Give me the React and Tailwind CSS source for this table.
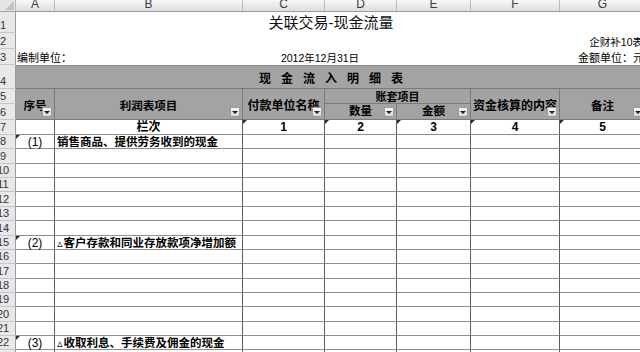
const W = ['w-[39px]', 'w-[188px]', 'w-[82px]', 'w-[72px]', 'w-[74px]', 'w-[89px]', 'w-[86px]'];
const LETTERS = ['A', 'B', 'C', 'D', 'E', 'F', 'G'];

// heights of sheet rows 1..23
const ROW_H = [
  'h-[21px]', 'h-[16px]', 'h-[16px]', 'h-[24px]', 'h-[15px]', 'h-[16px]', 'h-[15px]',
  'h-[14px]', 'h-[15px]', 'h-[14px]', 'h-[14px]', 'h-[15px]', 'h-[14px]', 'h-[15px]', 'h-[14px]',
  'h-[14px]', 'h-[15px]', 'h-[14px]', 'h-[14px]', 'h-[15px]', 'h-[14px]', 'h-[14px]', 'h-[14px]',
];

const DATA = {
  8: ['(1)', '销售商品、提供劳务收到的现金', false],
  15: ['(2)', '客户存款和同业存放款项净增加额', true],
  22: ['(3)', '收取利息、手续费及佣金的现金', true],
};

function Filter() {
  return (
    <span className="absolute right-[2px] bottom-[2px] w-[10px] h-[10px] border border-[#9a9a9a] bg-linear-to-b from-[#fafafa] to-[#d6d6d6] flex items-center justify-center">
      <span className="w-0 h-0 border-l-[3px] border-r-[3px] border-t-[3px] border-l-transparent border-r-transparent border-t-[#1e1e1e]" />
    </span>
  );
}

function Flag() {
  return <span className="absolute left-0 top-0 w-0 h-0 border-t-[4px] border-r-[4px] border-t-[#2b2b2b] border-r-transparent" />;
}

export default function App() {
  const head = 'relative flex items-center justify-center bg-[#a3a3a3] border-r border-b border-[#7a7a7a] font-bold text-[11.5px] text-black whitespace-nowrap';
  const r7 = 'relative flex items-center justify-center border-r border-r-[#5c5c5c] border-b border-b-[#8f8f8f] font-bold text-[12px] text-black';

  return (
    <div className="w-[640px] h-[352px] overflow-hidden bg-white font-['Liberation_Sans','Noto_Sans_CJK_SC',sans-serif] text-black">
      {/* column letters */}
      <div className="flex h-[12px] overflow-hidden border-b border-[#9c9c9c]">
        <div className="w-[16px] shrink-0 bg-[#e6e6e6] border-r border-[#b8b8b8] flex items-end justify-end pr-[1px] pb-[1px]">
          <svg width="9" height="9" viewBox="0 0 9 9">
            <polygon points="9,0 9,9 0,9" fill="#c2c2c2" />
          </svg>
        </div>
        {LETTERS.map((l, i) => (
          <div key={l} className={`${W[i]} shrink-0 flex items-start justify-center bg-linear-to-b from-[#f8f8f8] to-[#dedede] border-r border-[#bcbcbc] text-[12px] leading-[9px] text-[#3d3d3d]`}>
            {l}
          </div>
        ))}
      </div>

      <div className="flex">
        {/* row numbers */}
        <div className="w-[16px] shrink-0 flex flex-col overflow-hidden">
          {ROW_H.map((h, i) => (
            <div key={i} className={`${h} shrink-0 flex items-end justify-center pr-[9px] pb-[1px] bg-[#e8e8e8] border-b border-[#c6c6c6] border-r border-r-[#9c9c9c] text-[11px] leading-[11px] text-[#353535] whitespace-nowrap`}>
              {i + 1}
            </div>
          ))}
        </div>

        <div className="w-[630px] shrink-0 flex flex-col">
          {/* rows 1-7 */}
          <div className="grid grid-cols-[39px_188px_82px_72px_74px_89px_86px] grid-rows-[21px_16px_16px_24px_15px_16px_15px]">
            <div className="col-[1/8] row-[1/2] flex items-center justify-center text-[15px] leading-[16px] text-[#111]">
              关联交易-现金流量
            </div>
            <div className="col-[7/8] row-[2/3] flex items-end justify-end pr-[3px] pb-[1px] text-[10.5px] leading-[12px] whitespace-nowrap">
              企财补10表
            </div>
            <div className="col-[1/3] row-[3/4] flex items-end pl-[1px] pb-[1px] text-[11px] leading-[12px] whitespace-nowrap">
              编制单位：
            </div>
            <div className="col-[3/5] row-[3/4] flex items-end justify-center pb-[1px] text-[10.5px] leading-[12px] whitespace-nowrap">
              2012年12月31日
            </div>
            <div className="col-[7/8] row-[3/4] flex items-end justify-end pr-[2px] pb-[1px] text-[11px] leading-[12px] whitespace-nowrap">
              金额单位：元
            </div>

            <div className="col-[1/8] row-[4/5] flex items-center justify-center bg-[#a3a3a3] border-t border-t-[#8c8c8c] border-b border-[#7a7a7a] font-bold text-[12px] tracking-[10px] pl-[10px] pt-[3px]">
              现金流入明细表
            </div>

            <div className={`col-[1/2] row-[5/7] ${head} pt-[5px]`}>序号<Filter /></div>
            <div className={`col-[2/3] row-[5/7] ${head} pt-[5px]`}>利润表项目<Filter /></div>
            <div className={`col-[3/4] row-[5/7] ${head} text-[12px] pt-[4px]`}>付款单位名称<Filter /></div>
            <div className={`col-[4/6] row-[5/6] ${head} text-[11px] pt-[3px]`}>账套项目</div>
            <div className={`col-[4/5] row-[6/7] ${head}`}>数量<Filter /></div>
            <div className={`col-[5/6] row-[6/7] ${head}`}>金额<Filter /></div>
            <div className={`col-[6/7] row-[5/7] ${head} text-[12px] pt-[3px]`}>资金核算的内容<Filter /></div>
            <div className={`col-[7/8] row-[5/7] ${head} pt-[5px]`}>备注<Filter /></div>

            <div className={`col-[1/2] row-[7/8] ${r7}`} />
            <div className={`col-[2/3] row-[7/8] ${r7} text-[11px]`}>栏次</div>
            <div className={`col-[3/4] row-[7/8] ${r7}`}><Flag />1</div>
            <div className={`col-[4/5] row-[7/8] ${r7}`}><Flag />2</div>
            <div className={`col-[5/6] row-[7/8] ${r7}`}><Flag />3</div>
            <div className={`col-[6/7] row-[7/8] ${r7}`}><Flag />4</div>
            <div className={`col-[7/8] row-[7/8] ${r7}`}><Flag />5</div>
          </div>

          {/* data rows 8-23 */}
          {ROW_H.slice(7).map((h, k) => {
            const row = k + 8;
            const d = DATA[row];
            return (
              <div key={row} className={`${h} shrink-0 flex`}>
                {W.map((w, i) => (
                  <div key={i} className={`${w} shrink-0 relative flex items-center border-r border-r-[#5c5c5c] border-b border-b-[#8f8f8f] whitespace-nowrap`}>
                    {i === 0 && d && (
                      <>
                        <Flag />
                        <span className="w-full text-center text-[12px] leading-[12px]">{d[0]}</span>
                      </>
                    )}
                    {i === 1 && d && (
                      <span className="pl-[2px] font-bold text-[11.5px] leading-[12px] flex items-end">
                        {d[2] && <span className="font-['DejaVu_Sans'] font-normal text-[11px] leading-[11px] mr-[1px]">▵</span>}
                        {d[1]}
                      </span>
                    )}
                  </div>
                ))}
              </div>
            );
          })}
        </div>
      </div>
    </div>
  );
}
